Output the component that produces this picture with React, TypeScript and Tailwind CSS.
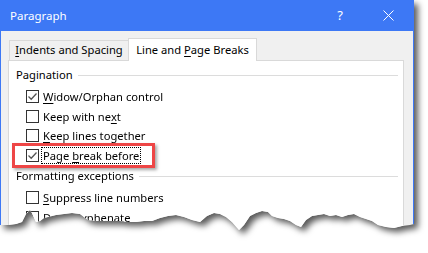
import React from "react";

const U = ({ children }: { children: React.ReactNode }) => <span className="underline underline-offset-2">{children}</span>;

function Box({ checked }: { checked?: boolean }) {
  return (
    <div className="w-[13px] h-[13px] border border-[#333333] bg-white flex items-center justify-center shrink-0">
      {checked && (
        <svg width="11" height="11" viewBox="0 0 11 11">
          <path d="M1.5 5.5 L4.2 8.2 L9.5 2.5" fill="none" stroke="#555" strokeWidth="1.3" />
        </svg>
      )}
    </div>
  );
}

function Row({ checked, children, focus }: { checked?: boolean; children: React.ReactNode; focus?: boolean }) {
  return (
    <div className="h-[19.5px] flex items-center pl-[17px]">
      <Box checked={checked} />
      <div className={"ml-[3px] px-[1px] leading-[15px] " + (focus ? "outline outline-1 outline-dotted outline-black" : "")}>{children}</div>
    </div>
  );
}

export default function App() {
  return (
    <div className="w-[428px] h-[253px] bg-white relative overflow-hidden" style={{ fontFamily: '"Noto Sans", "Open Sans", sans-serif' }}>
      <div className="w-[414px] [filter:drop-shadow(4px_4px_3px_rgba(0,0,0,0.65))]">
        <div className="w-[414px] h-[240px] flex flex-col bg-[#f0f0f0] border-x border-[#3d78f5] [clip-path:polygon(0px_0px,414px_0px,414px_224px,410px_225px,402px_226px,394px_228px,386px_227px,378px_225px,372px_221px,366px_219px,360px_217px,354px_214px,348px_215px,342px_217px,336px_215px,330px_216px,324px_214px,318px_215px,312px_216px,306px_220px,301px_227px,296px_225px,290px_221px,284px_219px,278px_218px,272px_216px,268px_212px,262px_211px,256px_213px,250px_216px,244px_225px,239px_230px,232px_222px,226px_217px,220px_214px,214px_213px,207px_216px,200px_222px,192px_220px,184px_217px,176px_215px,168px_216px,160px_218px,152px_221px,144px_221px,136px_222px,128px_222px,120px_221px,112px_221px,104px_221px,96px_221px,88px_220px,80px_214px,72px_213px,64px_214px,56px_215px,48px_217px,44px_218px,40px_221px,36px_222px,32px_213px,30px_210px,26px_214px,22px_222px,16px_224px,8px_225px,0px_225px)]">
          <div className="h-[31px] bg-[#3d78f5] flex items-center text-white text-[11.5px] shrink-0">
            <span className="ml-[9px]">Paragraph</span>
            <span className="ml-auto mr-[40px] text-[13px]">?</span>
            <svg width="11" height="11" viewBox="0 0 11 11" className="mr-[19px]">
              <path d="M0.5 0.5 L10.5 10.5 M10.5 0.5 L0.5 10.5" stroke="white" strokeWidth="1" />
            </svg>
          </div>
          <div className="flex-1 pl-[7px] pr-[9px] pt-[7px] text-[11.2px] text-black">
            <div className="flex items-end h-[22px] relative z-10">
              <div className="h-[20px] ml-[1px] w-[120px] border border-b-0 border-[#d9d9d9] bg-[#f0f0f0] flex items-center justify-center">
                <span><U>I</U>ndents and Spacing</span>
              </div>
              <div className="w-[129px] border border-b-0 border-[#d9d9d9] bg-white flex items-center justify-center -ml-[1px] mb-[-1px] h-[23px]">
                <span>Line and <U>P</U>age Breaks</span>
              </div>
            </div>
            <div className="h-[200px] border border-[#d9d9d9] bg-white pr-[5px]">
              <div className="h-[26px] flex items-center pl-[7px] pt-[2px]">
                <span>Pagination</span>
                <div className="flex-1 h-px bg-[#dcdcdc] ml-[5px]" />
              </div>
              <Row checked><U>W</U>idow/Orphan control</Row>
              <Row>Keep with ne<U>x</U>t</Row>
              <Row><U>K</U>eep lines together</Row>
              <Row checked focus>Page <U>b</U>reak before</Row>
              <div className="h-[23px] flex items-center pl-[7px]">
                <span>Formatting exceptions</span>
                <div className="flex-1 h-px bg-[#dcdcdc] ml-[5px]" />
              </div>
              <Row><U>S</U>uppress line numbers</Row>
              <Row><U>D</U>on't hyphenate</Row>
            </div>
          </div>
        </div>
      </div>
      <div className="absolute left-[12px] top-[143px] w-[143px] h-[25px] border-[3px] border-[#ee4646] shadow-[2px_2px_3px_rgba(0,0,0,0.35)]" />
    </div>
  );
}
